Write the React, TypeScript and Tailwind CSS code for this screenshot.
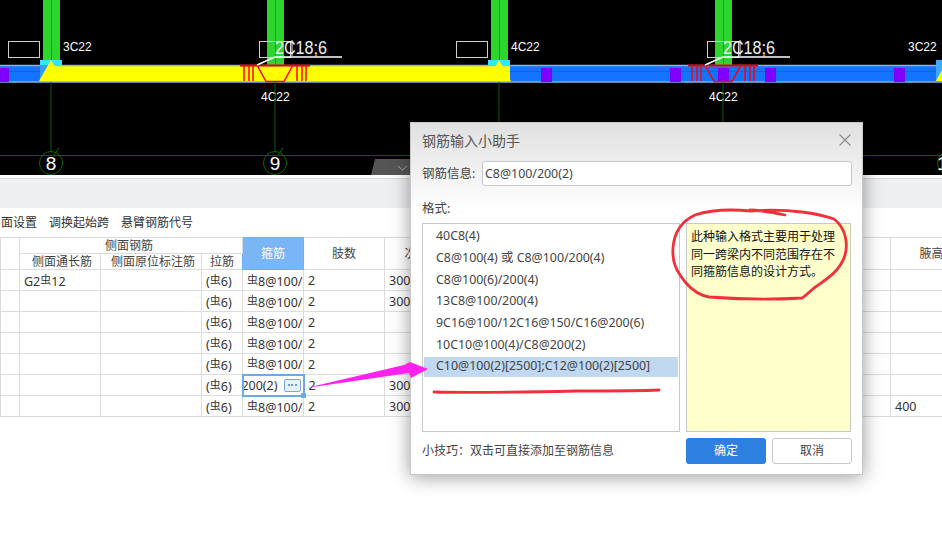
import React from "react";

const F = '"Noto Sans", "Noto Sans CJK SC", sans-serif';

function Rebar({ x }: { x: number }) {
  const d = x - 275;
  return (
    <g stroke="#ff0000" strokeWidth="1.5" fill="none">
      <path d={`M${240 + d} 65.5H${310 + d}`} strokeWidth="2" stroke="#e00000" />
      {[244, 249, 253, 297, 302, 306].map((v) => (
        <path key={v} d={`M${v + d} 65V81`} />
      ))}
      <path d={`M${257 + d} 65L${266 + d} 81.5H${284 + d}L${293 + d} 65`} />
    </g>
  );
}

function Leader({ x }: { x: number }) {
  return (
    <g>
      <text x={x} y={54} fill="#eee" fontSize="18" fontFamily="Liberation Sans, sans-serif" textLength="52" lengthAdjust="spacingAndGlyphs">2C18;6</text>
      <path d={`M${x + 17} 40V56`} stroke="#eee" strokeWidth="1" />
      <path d={`M${x} 57H${x + 67}M${x - 18} 65L${x} 57`} stroke="#fff" strokeWidth="1.5" fill="none" />
    </g>
  );
}

function Axis({ x, label }: { x: number; label: string }) {
  return (
    <g>
      <path d={`M${x} 82V152`} stroke="#0a5c0a" strokeWidth="1" />
      <circle cx={x} cy={163} r={11.5} stroke="#0a6a0a" strokeWidth="1" fill="none" />
      <path d={`M${x + 3} 155L${x + 8} 148`} stroke="#0a6a0a" strokeWidth="1" />
      <text x={x} y={170} textAnchor="middle" fill="#fff" fontSize="19" fontFamily="Liberation Sans, sans-serif">{label}</text>
    </g>
  );
}

function CadView() {
  const label = (x: number, y: number, t: string) => (
    <text x={x} y={y} fill="#fff" fontSize="12" fontFamily="Liberation Sans, sans-serif">{t}</text>
  );
  return (
    <svg width="942" height="175" viewBox="0 0 942 175" className="block bg-black">
      <path d="M0 155.5H942" stroke="#0a5c0a" strokeWidth="1" />
      {[51, 275, 499, 723].map((x) => (
        <g key={x}>
          <rect x={x - 8} y={0} width={17} height={66} fill="#2dd62d" />
          <path d={`M${x + 0.5} 0V66`} stroke="#d83a1a" strokeWidth="1" />
        </g>
      ))}
      <rect x={0} y={65} width={942} height={17} fill="#1473ff" />
      <path d="M0 71.5H942" stroke="#d81a4a" strokeWidth="1" />
      <rect x={40} y={65} width={470} height={17} fill="#ffff00" />
      <path d="M0 65.5H942M0 82H942" stroke="#7fb4e8" strokeWidth="1.4" />
      {[0, 541, 670, 718, 765, 894].map((x) => (
        <rect key={x} x={x} y={68} width={x === 0 ? 9 : 11} height={14} fill="#8000ff" />
      ))}
      <rect x={40} y={60} width={22} height={6} fill="#33e6ff" />
      <rect x={488} y={60} width={22} height={6} fill="#33e6ff" />
      <rect x={40} y={65} width={12} height={16} fill="#33a0ff" />
      <rect x={936} y={60} width={6} height={21} fill="#3fa9ff" />
      <path d="M51 60L39 81H63Z" fill="#ffff00" />
      <path d="M499 60L487 81H511Z" fill="#ffff00" />
      <path d="M942 70L936 81H942Z" fill="#ffff00" />
      <g fill="none" stroke="#cfcfcf" strokeWidth="1">
        <rect x={8.5} y={41.5} width={31} height={16} />
        <rect x={259.5} y={41.5} width={31} height={16} />
        <rect x={456.5} y={41.5} width={31} height={16} />
        <rect x={707.5} y={41.5} width={31} height={16} />
      </g>
      <Rebar x={275} />
      <Rebar x={723} />
      <Leader x={275} />
      <Leader x={723} />
      {label(63, 51, "3C22")}
      {label(511, 51, "4C22")}
      {label(908, 51, "3C22")}
      {label(261, 101, "4C22")}
      {label(709, 101, "4C22")}
      <Axis x={51} label="8" />
      <Axis x={275} label="9" />
      <path d="M499 82V125M723 82V125" stroke="#0a5c0a" strokeWidth="1" />
      <circle cx={949} cy={163} r={11.5} stroke="#0a6a0a" strokeWidth="1" fill="none" />
      <text x={937} y={170} fill="#fff" fontSize="19" fontFamily="Liberation Sans, sans-serif">1</text>
      <path d="M375 159H412V175H371Z" fill="#555" />
      <path d="M398 166L402.500 170L407 166" stroke="#aaa" strokeWidth="1" fill="none" />
    </svg>
  );
}

function Steel({ children }: { children: React.ReactNode }) {
  return (
    <>
      <span className="text-[11px] align-[2px]">虫</span>
      {children}
    </>
  );
}

const CELL = "border border-[#dcdcdc] px-1 h-[21px] p-0 whitespace-nowrap overflow-hidden text-[#333] text-[12.500px]";
const HEAD = "border border-[#dcdcdc] p-0 text-center font-normal whitespace-nowrap overflow-hidden text-[#444]";

const ROWS = [
  { side: "G2", s3: "300", s8: "" },
  { side: "", s3: "300", s8: "" },
  { side: "", s3: "", s8: "" },
  { side: "", s3: "", s8: "" },
  { side: "", s3: "", s8: "" },
  { side: "", s3: "300", s8: "", active: true },
  { side: "", s3: "300", s8: "400" },
];

function BeamTable() {
  return (
    <table className="table-fixed border-collapse w-[1000px] text-[12px] leading-[15px]">
      <colgroup>
        <col className="w-[19px]" />
        <col className="w-[81px]" />
        <col className="w-[101px]" />
        <col className="w-[41px]" />
        <col className="w-[61px]" />
        <col className="w-[81px]" />
        <col className="w-[88px]" />
        <col className="w-[418px]" />
        <col className="w-[110px]" />
      </colgroup>
      <thead>
        <tr className="h-[16px]">
          <th rowSpan={2} className={HEAD} />
          <th colSpan={3} className={`${HEAD} pr-[4px]`}>侧面钢筋</th>
          <th rowSpan={2} className="border border-[#6fb0f5] bg-[#7ab5f5] text-white text-center font-normal p-0">箍筋</th>
          <th rowSpan={2} className={HEAD}>肢数</th>
          <th rowSpan={2} className={HEAD}>次梁宽度</th>
          <th rowSpan={2} className={HEAD} />
          <th rowSpan={2} className={`${HEAD} pr-[28px]`}>腋高</th>
        </tr>
        <tr className="h-[15px]">
          <th className={`${HEAD} pl-[4px]`}>侧面通长筋</th>
          <th className={`${HEAD} pl-[4px]`}>侧面原位标注筋</th>
          <th className={HEAD}>拉筋</th>
        </tr>
      </thead>
      <tbody>
        {ROWS.map((r, i) => (
          <tr key={i} className="h-[21px]">
            <td className={CELL} />
            <td className={CELL}>{r.side && <>G2<Steel>12</Steel></>}</td>
            <td className={CELL} />
            <td className={CELL}>(<Steel>6</Steel>)</td>
            {r.active ? (
              <td className="border-2 border-[#6aaae8] p-0 h-[21px] relative text-[12.500px]">
                <div className="flex items-center justify-between pr-[2px] overflow-hidden text-[#333]">
                  <span className="w-[34px] flex justify-end overflow-hidden whitespace-nowrap">200(2)</span>
                  <span className="w-[17px] h-[13px] rounded-[2px] border border-[#7aa7dc] bg-[#e8f0fb] flex items-center justify-center gap-[1.500px]">
                    <i className="w-[2px] h-[2px] bg-[#3f7fd0] rounded-full" />
                    <i className="w-[2px] h-[2px] bg-[#3f7fd0] rounded-full" />
                    <i className="w-[2px] h-[2px] bg-[#3f7fd0] rounded-full" />
                  </span>
                </div>
                <i className="absolute -right-[3px] -bottom-[3px] w-[5px] h-[5px] bg-[#6aaae8]" />
              </td>
            ) : (
              <td className={CELL}><Steel>8@100/200(2)</Steel></td>
            )}
            <td className={CELL}>2</td>
            <td className={CELL}>{r.s3}</td>
            <td className={CELL} />
            <td className={CELL}>{r.s8}</td>
          </tr>
        ))}
      </tbody>
    </table>
  );
}

const FORMATS = [
  "40C8(4)",
  "C8@100(4) 或 C8@100/200(4)",
  "C8@100(6)/200(4)",
  "13C8@100/200(4)",
  "9C16@100/12C16@150/C16@200(6)",
  "10C10@100(4)/C8@200(2)",
  "C10@100(2)[2500];C12@100(2)[2500]",
];

function Dialog() {
  return (
    <div className="absolute left-[410px] top-[122px] w-[453px] h-[353px] border border-[#c8c8c8] bg-gradient-to-b from-[#e0e0e0] to-white to-[25%] shadow-[0_2px_18px_rgba(0,0,0,0.4)] flex flex-col px-[11px] text-[#444]">
      <div className="h-[38px] pb-[4px] flex items-center justify-between shrink-0">
        <span className="text-[14px] text-[#555]">钢筋输入小助手</span>
        <svg width="12" height="12" viewBox="0 0 12 12" fill="none" stroke="#8a8a8a" strokeWidth="1.1">
          <path d="M0.500 0.500L11.500 11.500M11.500 0.500L0.500 11.500" />
        </svg>
      </div>
      <div className="flex items-center h-[25px] shrink-0">
        <span className="w-[60px] shrink-0 text-[12.500px] pt-[2px]">钢筋信息:</span>
        <div className="w-[370px] shrink-0 h-[25px] bg-white border border-[#c8c8c8] rounded-[3px] flex items-center px-[2px] pt-[1px] text-[12.400px] text-[#444]">C8@100/200(2)</div>
      </div>
      <div className="mt-[15px] h-[16px] text-[12.500px] leading-[16px] shrink-0">格式:</div>
      <div className="mt-[6px] flex gap-[6px] h-[209px] shrink-0">
        <div className="w-[258px] border border-[#c8c8c8] bg-white py-[1px] px-[1px] flex flex-col">
          {FORMATS.map((f, i) => (
            <div
              key={f}
              className={
                i === 6
                  ? "h-[20px] mt-[1px] mb-[0.800px] flex items-center pl-[12px] text-[12.400px] whitespace-nowrap bg-[#c0d8f0]"
                  : "h-[21.800px] pt-[1px] flex items-center pl-[12px] text-[12.400px] whitespace-nowrap"
              }
            >
              {f}
            </div>
          ))}
        </div>
        <div className="w-[165px] border border-[#c8c8c8] bg-[#ffffcc] pl-[4px] pr-[14px] pt-[4px] text-[12px] leading-[17.500px] text-[#111]">
          此种输入格式主要用于处理同一跨梁内不同范围存在不同箍筋信息的设计方式。
        </div>
      </div>
      <div className="mt-[5px] flex items-center justify-between h-[27px] shrink-0">
        <span className="text-[12px]">小技巧：双击可直接添加至钢筋信息</span>
        <div className="flex gap-[6px] -mr-[1px]">
          <div className="w-[80px] h-[26px] rounded-[3px] bg-[#2d7fe0] text-white text-[12px] flex items-center justify-center">确定</div>
          <div className="w-[80px] h-[26px] rounded-[3px] bg-white border border-[#c8c8c8] text-[12px] text-[#444] flex items-center justify-center">取消</div>
        </div>
      </div>
    </div>
  );
}

function Annotations() {
  return (
    <svg width="942" height="537" viewBox="0 0 942 537" className="absolute left-0 top-0 pointer-events-none">
      <path d="M306 388L404 365L410 362L428 369L411 378L409 373Z" fill="#ff22ee" />
      <g fill="none" stroke="#f2303c" strokeWidth="2.800" strokeLinecap="round" strokeLinejoin="round">
        <path d="M785 215C770 212 760 210 750 210M751 211C790 208 820 214 834 219C846 228 849 245 844 258C838 273 825 280 814 288C809 292 806 296 802 298C770 300 735 299 709 297C698 295 692 290 686 283C676 271 672 262 673 248C674 234 680 222 695 215C710 210 730 209 751 211" />
        <path d="M434 392C480 393 530 392 576 391C610 391 640 391 659 390" />
      </g>
    </svg>
  );
}

export default function App() {
  return (
    <div className="relative w-[942px] h-[537px] overflow-hidden bg-white" style={{ fontFamily: F }}>
      <CadView />
      <div className="h-[4px] border-b border-[#d8d8d8]" />
      <div className="h-[29px] bg-[#eeeff1]" />
      <div className="h-[29px] flex items-center gap-[12px] text-[12px] text-[#333] ml-[1px]">
        <span>面设置</span>
        <span>调换起始跨</span>
        <span>悬臂钢筋代号</span>
      </div>
      <BeamTable />
      <Dialog />
      <Annotations />
    </div>
  );
}
